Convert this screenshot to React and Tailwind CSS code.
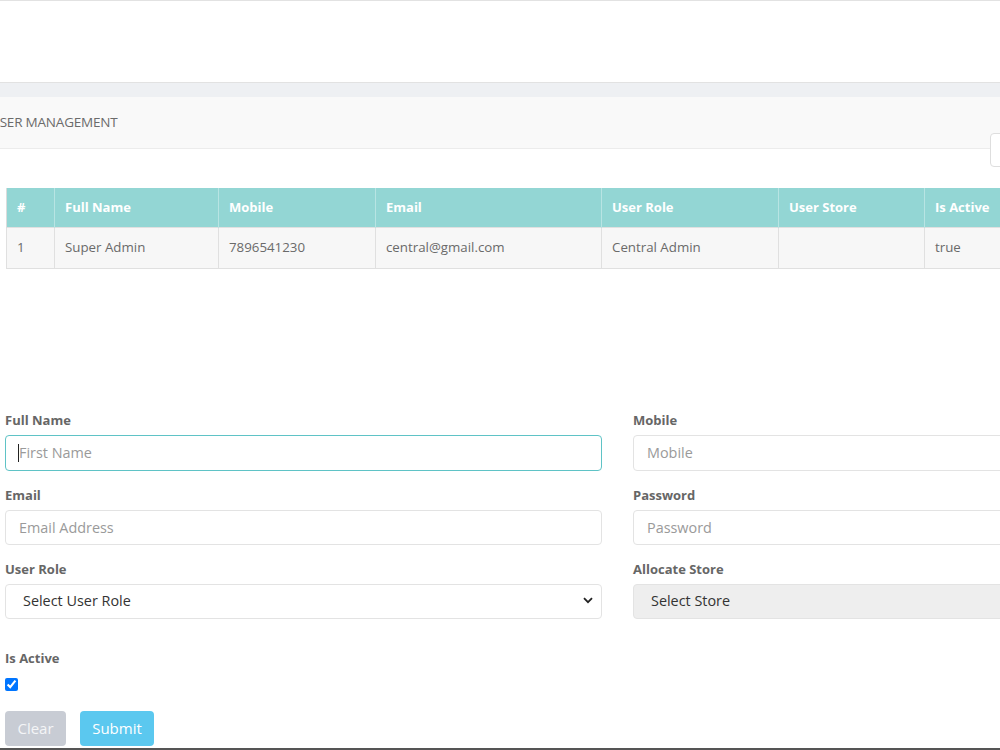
import { useState } from "react";

const cols = [
  { label: "#", w: "w-[48px]" },
  { label: "Full Name", w: "w-[164px]" },
  { label: "Mobile", w: "w-[157px]" },
  { label: "Email", w: "w-[226px]" },
  { label: "User Role", w: "w-[177px]" },
  { label: "User Store", w: "w-[146px]" },
  { label: "Is Active", w: "w-[120px]" },
  { label: "Action", w: "w-[190px]" },
];

const row = ["1", "Super Admin", "7896541230", "central@gmail.com", "Central Admin", "", "true", ""];

function Field({ label, children }) {
  return (
    <div>
      <label className="block text-[13px] font-bold text-[#666] leading-[20px] mb-[5px]">{label}</label>
      {children}
    </div>
  );
}

export default function App() {
  const [active, setActive] = useState(true);

  return (
    <div className="w-[1000px] h-[750px] overflow-hidden bg-white font-['Open_Sans',sans-serif]">
      <div className="-ml-[15px] w-[1280px] relative">
        {/* top bar */}
        <div className="h-[83px] border-t border-b border-[#e2e2e2] bg-white"></div>
        <div className="h-[14px] bg-[#eef0f3]"></div>

        {/* card header */}
        <div className="h-[52px] bg-[#f9f9f9] border-b border-[#ececec] pl-[5px] flex items-center">
          <span className="text-[13.5px] text-[#6b6b6b] tracking-[-0.2px]">USER MANAGEMENT</span>
        </div>
        <div className="absolute left-[1005px] top-[133px] w-[200px] h-[34px] bg-white border border-[#dedede] rounded-[4px]"></div>

        {/* table */}
        <div className="pl-[21px] pt-[39px]">
          <table className="table-fixed border-collapse text-[13px]">
            <thead>
              <tr className="bg-[#93d6d4] h-[39px]">
                {cols.map((c) => (
                  <th
                    key={c.label}
                    className={`${c.w} text-left font-bold text-white px-[10px] border-l border-r border-[#b8e4e3] first:border-l-[#dcdcdc]`}
                  >
                    {c.label}
                  </th>
                ))}
              </tr>
            </thead>
            <tbody>
              <tr className="bg-[#f7f7f7] h-[41px]">
                {row.map((v, i) => (
                  <td key={i} className="px-[10px] text-[13.3px] text-[#6a6a6a] border border-[#e0e0e0]">
                    {v}
                  </td>
                ))}
              </tr>
            </tbody>
          </table>
        </div>

        {/* form */}
        <form className="pl-[20px] pt-[141px]">
          <div className="grid grid-cols-[597px_597px] gap-x-[31px] gap-y-[14px]">
            <Field label="Full Name">
              <div className="relative">
                <input
                  placeholder="First Name"
                  className="w-full h-[36px] px-[13px] text-[14.4px] rounded-[4px] border border-[#5fc3c6] outline-none placeholder:text-[#9a9a9a] caret-black"
                />
                <span className="absolute left-[13px] top-[9px] w-[1px] h-[18px] bg-[#222]"></span>
              </div>
            </Field>
            <Field label="Mobile">
              <input
                placeholder="Mobile"
                className="w-full h-[36px] px-[13px] text-[14.4px] rounded-[4px] border border-[#e3e3e3] outline-none placeholder:text-[#9a9a9a]"
              />
            </Field>
            <Field label="Email">
              <input
                placeholder="Email Address"
                className="w-full h-[35px] px-[13px] text-[14.4px] rounded-[4px] border border-[#e3e3e3] outline-none placeholder:text-[#9a9a9a]"
              />
            </Field>
            <Field label="Password">
              <input
                type="password"
                placeholder="Password"
                className="w-full h-[35px] px-[13px] text-[14.4px] rounded-[4px] border border-[#e3e3e3] outline-none placeholder:text-[#9a9a9a]"
              />
            </Field>
            <Field label="User Role">
              <div className="relative">
                <select className="w-full h-[35px] pl-[17px] pr-8 text-[14.4px] text-[#333] rounded-[4px] border border-[#e3e3e3] bg-white appearance-none outline-none">
                  <option>Select User Role</option>
                </select>
                <svg
                  className="absolute right-[9px] top-[13px] pointer-events-none"
                  width="10"
                  height="7"
                  viewBox="0 0 10 7"
                >
                  <path d="M1 1.2 L5 5.2 L9 1.2" fill="none" stroke="#222" strokeWidth="1.8" />
                </svg>
              </div>
            </Field>
            <Field label="Allocate Store">
              <select
                disabled
                className="w-full h-[35px] pl-[17px] text-[14.4px] text-[#333] rounded-[4px] border border-[#e3e3e3] bg-[#eeeeee] appearance-none outline-none opacity-100"
              >
                <option>Select Store</option>
              </select>
            </Field>
          </div>

          <div className="mt-[29px]">
            <label className="block text-[13px] font-bold text-[#666] leading-[20px]">Is Active</label>
            <input
              type="checkbox"
              checked={active}
              onChange={(e) => setActive(e.target.checked)}
              className="block mt-[10px] w-[13px] h-[13px] m-0 accent-[#0075ff]"
            />
          </div>

          <div className="flex gap-[14px] mt-[20px]">
            <button type="button" className="w-[61px] h-[35px] rounded-[4px] bg-[#c8ccd4] text-[#f4f5f7] text-[15px]">
              Clear
            </button>
            <button type="submit" className="w-[74px] h-[35px] rounded-[4px] bg-[#5bc8ef] text-white text-[15px]">
              Submit
            </button>
          </div>
        </form>
      </div>
      <div className="fixed left-0 top-[748px] w-[1000px] h-[2px] bg-[#555]"></div>
    </div>
  );
}
